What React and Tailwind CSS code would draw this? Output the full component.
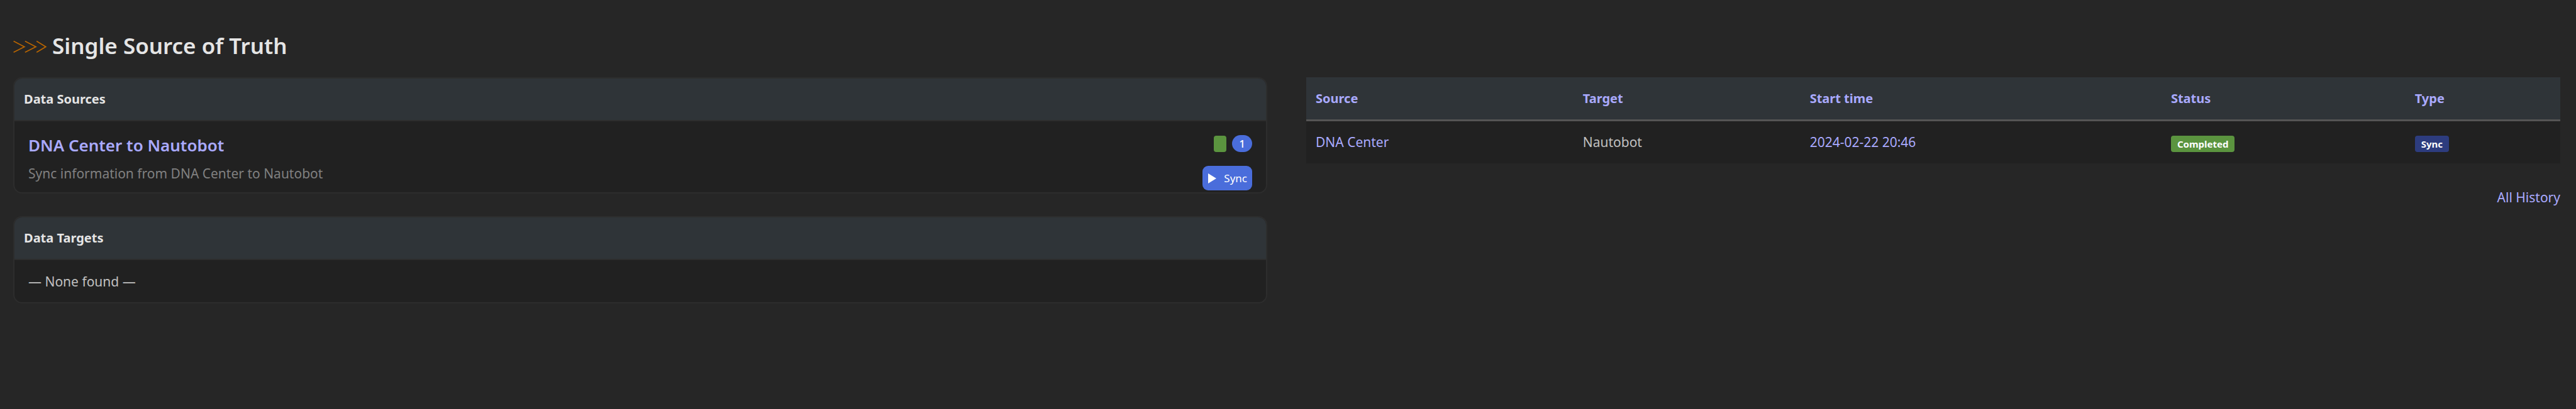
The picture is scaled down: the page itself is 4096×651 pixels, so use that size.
function Chevrons() {
  return (
    <svg
      className="h-[22px] w-[54px] shrink-0"
      viewBox="0 0 54 22"
      fill="none"
      stroke="#b96500"
      strokeWidth="1.7"
      aria-hidden="true"
    >
      <path d="M.6 3.6 L17.8 12.4 L.6 21.2 M18.8 3.6 L36 12.4 L18.8 21.2 M37.2 3.6 L51.8 12.4 L37.2 21.2" />
    </svg>
  );
}

function Panel({ title, children }) {
  return (
    <section className="overflow-hidden rounded-[14px] border-2 border-[#2d2d2d] bg-[#212121]">
      <h2 className="border-b-2 border-[#2d2d2d] bg-[#2f3438] px-[15px] py-[19px] text-[20px] leading-[28px] font-bold text-[#e5e5e5]">
        {title}
      </h2>
      {children}
    </section>
  );
}

function Label({ className, children }) {
  return (
    <span
      className={`inline-block h-[26px] rounded-[4px] px-2.5 align-top text-[15px] leading-[26px] font-bold text-white ${className}`}
    >
      {children}
    </span>
  );
}

const columns = [
  { name: "Source", width: "w-[21.3%]" },
  { name: "Target", width: "w-[18.1%]" },
  { name: "Start time", width: "w-[28.8%]" },
  { name: "Status", width: "w-[19.45%]" },
  { name: "Type", width: "w-[12.35%]" },
];

export default function App() {
  return (
    <main className="min-h-screen bg-[#262626] pt-[45px] pr-[25px] pb-10 pl-[21px] font-['Noto_Sans',sans-serif] text-[21px] leading-[28px] text-[#c0c0c0]">
      <h1 className="mb-[22px] flex items-center gap-2 text-[35px] leading-[56px] font-semibold text-[#e5e5e5]">
        <Chevrons />
        Single Source of Truth
      </h1>

      <div className="grid grid-cols-2 items-start gap-[62px]">
        <div className="flex flex-col gap-9">
          <Panel title="Data Sources">
            <div className="flex items-start justify-between px-[22px] pt-[19px] pb-[3px]">
              <div className="flex flex-col gap-3">
                <h3 className="text-[26px] leading-[38px] font-semibold">
                  <a href="#dna-center" className="text-[#aaaaff]">
                    DNA Center to Nautobot
                  </a>
                </h3>
                <p className="text-[#808080]">Sync information from DNA Center to Nautobot</p>
              </div>
              <div className="flex flex-col items-end gap-[22px] pt-[3px]">
                <div className="flex items-center gap-[9px]">
                  <span className="h-[26px] w-5 rounded-[4px] bg-[#5b943f]" />
                  <span className="h-[27px] w-8 rounded-full bg-[#4a6ddb] text-center text-[17px] leading-[27px] font-medium text-white">
                    1
                  </span>
                </div>
                <button
                  type="button"
                  className="flex h-[39px] items-center gap-3 rounded-[9px] bg-[#4a6ddb] pr-2 pl-[9px] text-[17px] leading-[28px] text-white"
                >
                  <svg className="h-4 w-[13px]" viewBox="0 0 13 16" fill="currentColor" aria-hidden="true">
                    <path d="M0 0 L13 8 L0 16 Z" />
                  </svg>
                  Sync
                </button>
              </div>
            </div>
          </Panel>

          <Panel title="Data Targets">
            <p className="px-[22px] pt-5 pb-[19px]">— None found —</p>
          </Panel>
        </div>

        <div>
          <table className="w-full table-fixed text-left">
            <thead>
              <tr className="border-b-3 border-[#555555] bg-[#2f3438]">
                {columns.map((c) => (
                  <th
                    key={c.name}
                    scope="col"
                    className={`${c.width} px-[15px] pt-5 pb-[19px] text-[20px] leading-[28px] font-bold`}
                  >
                    <a href="#sort" className="text-[#aaaaff]">
                      {c.name}
                    </a>
                  </th>
                ))}
              </tr>
            </thead>
            <tbody>
              <tr className="bg-[#212121] align-top">
                <td className="px-[15px] pt-[19px] pb-5">
                  <a href="#source" className="text-[#aaaaff]">
                    DNA Center
                  </a>
                </td>
                <td className="px-[15px] pt-[19px] pb-5">Nautobot</td>
                <td className="px-[15px] pt-[19px] pb-5">
                  <a href="#run" className="text-[#aaaaff]">
                    2024-02-22 20:46
                  </a>
                </td>
                <td className="px-[15px] pt-[23px]">
                  <Label className="bg-[#5b943f]">Completed</Label>
                </td>
                <td className="px-[15px] pt-[23px]">
                  <Label className="bg-[#2d3c7e]">Sync</Label>
                </td>
              </tr>
            </tbody>
          </table>
          <div className="mt-10 text-right">
            <a href="#history" className="text-[#aaaaff]">
              All History
            </a>
          </div>
        </div>
      </div>
    </main>
  );
}
